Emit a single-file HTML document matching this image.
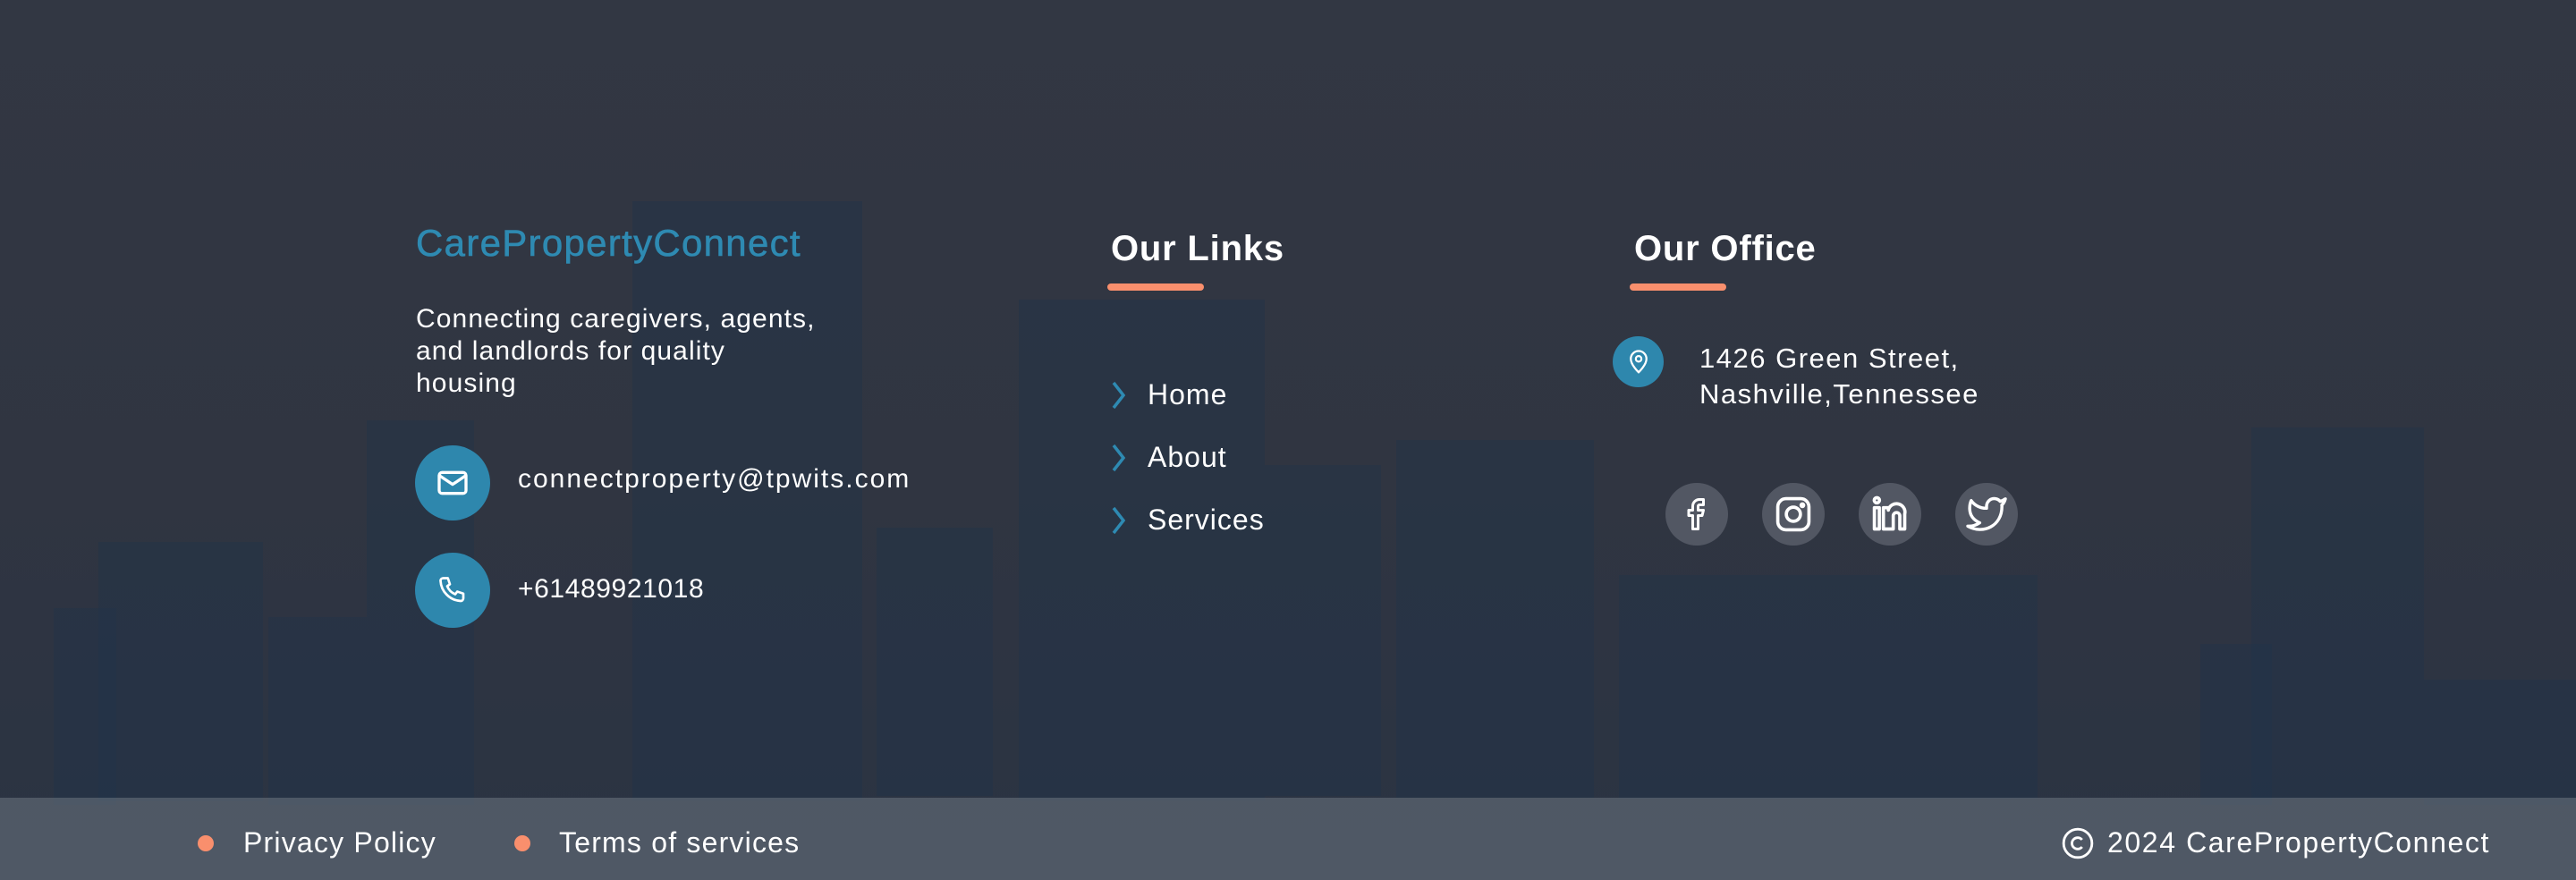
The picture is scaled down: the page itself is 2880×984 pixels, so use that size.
<!DOCTYPE html>
<html><head><meta charset="utf-8"><style>
html,body{margin:0;padding:0}
body{width:2880px;height:984px;position:relative;overflow:hidden;background:linear-gradient(#323743 0%,#303541 55%,#2a3343 100%);font-family:"Liberation Sans",sans-serif;color:#fff}
.b{position:absolute;background:#22324a;opacity:.45}
.a{position:absolute;white-space:nowrap}
.circ{position:absolute;border-radius:50%;display:flex;align-items:center;justify-content:center}
.blue{background:#2e87ad}
.soc{background:#525763;width:70px;height:70px;top:540px}
.ul{position:absolute;height:8px;border-radius:4px;background:#f98f6d;top:317px}
.h{font-weight:bold;font-size:40px;top:256px;letter-spacing:.8px}
.lk{font-size:32px;letter-spacing:1px}
.bar{position:absolute;left:0;top:892px;width:2880px;height:92px;background:rgba(110,118,130,.55)}
.dot{position:absolute;width:18px;height:18px;border-radius:50%;background:#f98f6d;top:934px}
.ft{font-size:32px;top:924px;letter-spacing:1.2px}
</style></head><body>
<div class="b" style="left:110px;top:606px;width:184px;height:290px"></div>
<div class="b" style="left:60px;top:680px;width:70px;height:220px"></div>
<div class="b" style="left:300px;top:690px;width:110px;height:210px"></div>
<div class="b" style="left:410px;top:470px;width:120px;height:430px"></div>
<div class="b" style="left:707px;top:225px;width:257px;height:670px"></div>
<div class="b" style="left:980px;top:590px;width:130px;height:300px"></div>
<div class="b" style="left:1139px;top:335px;width:275px;height:560px"></div>
<div class="b" style="left:1414px;top:520px;width:130px;height:370px"></div>
<div class="b" style="left:1561px;top:492px;width:221px;height:400px"></div>
<div class="b" style="left:1810px;top:643px;width:468px;height:250px"></div>
<div class="b" style="left:2517px;top:478px;width:193px;height:415px"></div>
<div class="b" style="left:2460px;top:720px;width:80px;height:180px"></div>
<div class="b" style="left:2710px;top:760px;width:170px;height:140px"></div>

<div class="a" style="left:465px;top:248px;font-size:42px;color:#2e8ab2;letter-spacing:1.3px;-webkit-text-stroke:.6px #2e8ab2">CarePropertyConnect</div>
<div class="a" style="left:465px;top:339px;font-size:30px;line-height:36px;letter-spacing:1.1px;white-space:normal;width:540px">Connecting caregivers, agents,<br>and landlords for quality<br>housing</div>

<div class="circ blue" style="left:464px;top:498px;width:84px;height:84px">
<svg width="40" height="40" viewBox="0 0 24 24" fill="none" stroke="#fff" stroke-width="2" stroke-linejoin="round"><rect x="3" y="5" width="18" height="14" rx="2"/><path d="M3 7l9 6 9-6"/></svg></div>
<div class="a" style="left:579px;top:519px;font-size:30px;letter-spacing:2px">connectproperty@tpwits.com</div>
<div class="circ blue" style="left:464px;top:618px;width:84px;height:84px">
<svg width="36" height="36" viewBox="0 0 24 24" fill="none" stroke="#fff" stroke-width="1.8" stroke-linejoin="round"><path d="M5 3h3.5l1.5 4.5-2 1.5a11 11 0 0 0 6 6l1.5-2 4.5 1.5V18a2 2 0 0 1-2 2A16 16 0 0 1 3 5a2 2 0 0 1 2-2z"/></svg></div>
<div class="a" style="left:579px;top:642px;font-size:30px;letter-spacing:.6px">+61489921018</div>

<div class="a h" style="left:1242px">Our Links</div>
<div class="ul" style="left:1238px;width:108px"></div>
<svg class="a" style="left:1240px;top:424px" width="24" height="36" viewBox="0 0 24 36"><path d="M5 4l11 14L5 32" fill="none" stroke="#2e8ab2" stroke-width="3.5"/></svg>
<div class="a lk" style="left:1283px;top:423px">Home</div>
<svg class="a" style="left:1240px;top:494px" width="24" height="36" viewBox="0 0 24 36"><path d="M5 4l11 14L5 32" fill="none" stroke="#2e8ab2" stroke-width="3.5"/></svg>
<div class="a lk" style="left:1283px;top:493px">About</div>
<svg class="a" style="left:1240px;top:564px" width="24" height="36" viewBox="0 0 24 36"><path d="M5 4l11 14L5 32" fill="none" stroke="#2e8ab2" stroke-width="3.5"/></svg>
<div class="a lk" style="left:1283px;top:563px">Services</div>

<div class="a h" style="left:1827px">Our Office</div>
<div class="ul" style="left:1822px;width:108px"></div>
<div class="circ blue" style="left:1803px;top:376px;width:57px;height:57px">
<svg width="30" height="30" viewBox="0 0 24 24" fill="none" stroke="#fff" stroke-width="1.8"><path d="M12 21s-7-6.5-7-12a7 7 0 0 1 14 0c0 5.5-7 12-7 12z"/><circle cx="12" cy="9" r="2.5"/></svg></div>
<div class="a" style="left:1900px;top:381px;font-size:31px;line-height:40px;letter-spacing:1.5px">1426 Green Street,<br>Nashville,Tennessee</div>

<div class="circ soc" style="left:1862px"><svg width="36" height="40" viewBox="0 0 24 26" fill="none" stroke="#fff" stroke-width="2" stroke-linejoin="round"><path d="M9 24V14H6v-4h3V7a5 5 0 0 1 5-5h3v4h-3a1 1 0 0 0-1 1v3h4l-1 4h-3v10z"/></svg></div>
<div class="circ soc" style="left:1970px"><svg width="44" height="44" viewBox="0 0 24 24" fill="none" stroke="#fff" stroke-width="2"><rect x="2.5" y="2.5" width="19" height="19" rx="5"/><circle cx="12" cy="12" r="4.3"/><circle cx="17.5" cy="6.5" r=".8" fill="#fff"/></svg></div>
<div class="circ soc" style="left:2078px"><svg width="44" height="44" viewBox="0 0 24 24" fill="none" stroke="#fff" stroke-width="2" stroke-linejoin="round"><circle cx="4" cy="3.5" r="1.6"/><rect x="2.5" y="8" width="3" height="13"/><path d="M8 21V8h3v1.5a5 5 0 0 1 10 2.5V21h-3v-8a2 2 0 0 0-4 0v8z"/></svg></div>
<div class="circ soc" style="left:2186px"><svg width="46" height="42" viewBox="0 0 24 22" fill="none" stroke="#fff" stroke-width="1.8" stroke-linejoin="round"><path d="M23 2a10 10 0 0 1-3 1.5 4.5 4.5 0 0 0-8 3v1A10.7 10.7 0 0 1 3 3s-4 9 5 13a11.6 11.6 0 0 1-7 2c9 5 20 0 20-11.5 0-.3 0-.6-.1-.8A7.7 7.7 0 0 0 23 2z"/></svg></div>

<div class="bar"></div>
<div class="dot" style="left:221px"></div>
<div class="a ft" style="left:272px">Privacy Policy</div>
<div class="dot" style="left:575px"></div>
<div class="a ft" style="left:625px">Terms of services</div>
<svg class="a" style="left:2304px;top:924px" width="38" height="38" viewBox="0 0 24 24" fill="none" stroke="#fff" stroke-width="1.8"><circle cx="12" cy="12" r="10"/><path d="M15 9.5a4 4 0 1 0 0 5"/></svg>
<div class="a ft" style="left:2356px;letter-spacing:1.6px">2024 CarePropertyConnect</div>
</body></html>
